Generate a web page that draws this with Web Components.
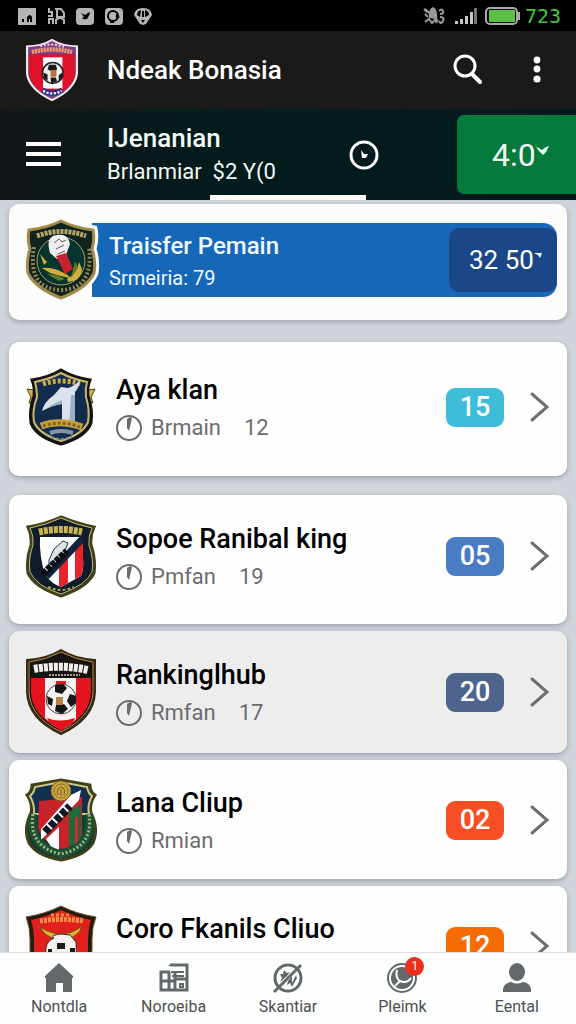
<!DOCTYPE html>
<html lang="id">
  <head>
    <meta charset="utf-8">
    <meta name="viewport" content="width=device-width, initial-scale=1">
    <title>Ndeak Bonasia</title>
<style>
  * {
    box-sizing: border-box;
  }
  body {
    margin: 0;
    height: 100vh;
    display: flex;
    flex-direction: column;
    background: #cfd5da;
    font-family: Roboto, "Liberation Sans", sans-serif;
  }
  main {
    flex: 1;
    min-height: 0;
    overflow-y: auto;
    scrollbar-width: none;
    display: flex;
    flex-direction: column;
    gap: 7px;
    padding: 4px 9px 8px;
  }
  main > * {
    flex: none;
  }
  transfer-card {
    margin-bottom: 15px;
  }
  club-card[size="large"] {
    margin-bottom: 12px;
  }
</style>
  </head>
  <body>
    <status-bar>723</status-bar>
    <app-header>Ndeak Bonasia</app-header>
    <match-bar>
      <span slot="title">IJenanian</span>
      <span slot="detail">Brlanmiar&nbsp; $2 Y(0</span>
      <span slot="score">4:0</span>
    </match-bar>

    <main>
      <transfer-card>
        <span slot="title">Traisfer Pemain</span>
        <span slot="detail">Srmeiria: 79</span>
        <span slot="value">32 50</span>
      </transfer-card>
      <club-card size="large" crest="one" style="--badge: #3dbdd8">
        <span slot="name">Aya klan</span>
        <span slot="detail">Brmain</span>
        <span slot="count">12</span>
        <span slot="badge">15</span>
      </club-card>
      <club-card size="medium" crest="stripes" style="--badge: #4a7cc3">
        <span slot="name">Sopoe Ranibal king</span>
        <span slot="detail">Pmfan</span>
        <span slot="count">19</span>
        <span slot="badge">05</span>
      </club-card>
      <club-card crest="ball" style="--badge: #4d648c; --card: #ededee">
        <span slot="name">Rankinglhub</span>
        <span slot="detail">Rmfan</span>
        <span slot="count">17</span>
        <span slot="badge">20</span>
      </club-card>
      <club-card size="small" crest="medal" style="--badge: #f84e26">
        <span slot="name">Lana Cliup</span>
        <span slot="detail">Rmian</span>
        <span slot="badge">02</span>
      </club-card>
      <club-card size="small" crest="eagle" style="--badge: #f66c04">
        <span slot="name">Coro Fkanils Cliuo</span>
        <span slot="detail">Rmian</span>
        <span slot="badge">12</span>
      </club-card>
    </main>

    <bottom-nav>
      <nav-item icon="home">Nontdla</nav-item>
      <nav-item icon="news">Noroeiba</nav-item>
      <nav-item icon="standings">Skantiar</nav-item>
      <nav-item icon="player" alerts="1">Pleimk</nav-item>
      <nav-item icon="account">Eental</nav-item>
    </bottom-nav>

    <!-- page parts -->

    <template id="status-bar">
      <style>
        :host {
          display: flex;
          flex: none;
          align-items: center;
          justify-content: space-between;
          height: 31px;
          padding: 0 15px 0 17px;
          background: #000;
          color: #3ec83a;
          font: 20px/28px "DejaVu Sans Mono", monospace;
        }
        div {
          display: flex;
          align-items: center;
          gap: 9px;
        }
        .system {
          gap: 5px;
        }
        svg {
          display: block;
        }
      </style>
      <div>
        <svg width="20" height="20" viewBox="0 0 20 20"><path fill="#b4b4b4" d="M1 2h18v17H1z"/><path d="M5 13h2v3H5zM10 16v-5q3-4 5 0v5h-2v-3h-1v3z"/></svg>
        <svg width="20" height="20" viewBox="0 0 20 20"><path d="M3 2v4h3v4H2M3 18v-5h4v5M9 3h6l3 4v4h-7V3M10 18v-4q4-4 8 0v4" fill="none" stroke="#b4b4b4" stroke-width="2"/></svg>
        <svg width="20" height="20" viewBox="0 0 20 20"><rect x="1" y="2" width="18" height="17" rx="4" fill="#b4b4b4"/><path d="M6 7l4 2 4-3 1 2-3 5q-4 1-5-1l2-1z"/></svg>
        <svg width="20" height="20" viewBox="0 0 20 20"><rect x="1" y="2" width="18" height="17" rx="4" fill="#b4b4b4"/><circle cx="9" cy="10" r="5" fill="none" stroke="#000" stroke-width="2"/><path d="M12 8l4 3-4 2zM6 14h4v3H6z"/></svg>
        <svg width="20" height="20" viewBox="0 0 20 20"><path fill="#b4b4b4" d="M1 9Q2 2 10 2t9 7l-6 9-3 1-3-1z"/><path d="M4 9q0-4 4-5l-1 7zM12 4q4 1 4 5l-4 2zM9 5h2v6H9zM8 14h4l-2 3z"/></svg>
      </div>
      <div class="system">
        <svg width="26" height="20" viewBox="0 0 26 20"><path fill="#9a9a9a" d="M6 12q-1-9 4-11 5 2 4 12z"/><path d="M1 3l3 3M2 8l3 3M2 16l4-3 3 4 3-3 2 3M2 3l13 12M16 5q3-3 4 0t-3 3M17 11q5 0 3 4t-4 0" fill="none" stroke="#9a9a9a" stroke-width="2"/></svg>
        <svg width="26" height="20" viewBox="0 0 26 20"><path fill="#c8c8c8" d="M1 15h3v3H1zM6 13h3v5H6zM11 10h3v8h-3zM16 6h3v12h-3z"/><path fill="#777" d="M20 2h3v16h-3z"/></svg>
        <svg width="35" height="18" viewBox="0 0 35 18"><rect x="1" y="1" width="31" height="16" rx="4" fill="none" stroke="#aaa" stroke-width="2"/><path fill="#5bc044" d="M4 3h26v12H4z"/><path fill="#aaa" d="M32 5h3v8h-3z"/></svg>
        <slot></slot>
      </div>
    </template>

    <template id="app-header">
      <style>
        :host {
          display: flex;
          flex: none;
          align-items: center;
          height: 78px;
          padding: 0 20px 0 25px;
          background: #1a1a19;
          color: #fff;
        }
        h1 {
          flex: 1;
          margin: 0 0 0 28px;
          font-size: 26px;
          font-weight: 500;
          line-height: 36px;
        }
        button {
          display: flex;
          margin: 0 0 0 32px;
          padding: 0;
          border: 0;
          background: none;
          color: inherit;
        }
        club-crest {
          width: 54px;
          height: 64px;
        }
      </style>
      <club-crest kind="badge"></club-crest>
      <h1><slot></slot></h1>
      <button aria-label="Cari"><svg width="32" height="32" viewBox="0 0 32 32" fill="none" stroke="#fff"><circle cx="13" cy="12" r="10" stroke-width="3"/><path d="M20 20l8 8" stroke-width="4" stroke-linecap="round"/></svg></button>
      <button aria-label="Menu lain"><svg width="40" height="32" viewBox="0 0 40 32" fill="#fff"><circle cx="21" cy="6" r="3.4"/><circle cx="21" cy="15" r="3.4"/><circle cx="21" cy="25" r="3.6"/></svg></button>
    </template>

    <template id="match-bar">
      <style>
        :host {
          display: flex;
          flex: none;
          flex-direction: column;
          align-items: center;
          padding-top: 6px;
          background: linear-gradient(90deg, #111518, #021c1d 40%, #05191c);
          color: #f2faf4;
        }
        .row {
          align-self: stretch;
          display: flex;
          align-items: center;
        }
        button {
          display: flex;
          align-items: center;
          padding: 0;
          border: 0;
          background: none;
          color: inherit;
          font: inherit;
        }
        .menu {
          margin: 0 46px 0 26px;
        }
        .text {
          flex: 1;
          line-height: 34px;
        }
        .title {
          font-size: 26px;
          font-weight: 500;
        }
        .detail {
          font-size: 22px;
        }
        .score {
          height: 79px;
          width: 119px;
          margin: 0 0 1px 78px;
          padding-left: 35px;
          border-radius: 7px 0 0 7px;
          background: #047b3c;
          font-size: 32px;
        }
        .score svg {
          margin-bottom: 8px;
        }
        .indicator {
          width: 27%;
          height: 5px;
          background: #fdfdf3;
        }
      </style>
      <div class="row">
        <button class="menu" aria-label="Menu"><svg width="35" height="26" viewBox="0 0 35 26" fill="#fff"><path d="M0 0h35v4H0zM0 10h35v4H0zM0 20h35v4H0z"/></svg></button>
        <div class="text">
          <div class="title"><slot name="title"></slot></div>
          <div class="detail"><slot name="detail"></slot></div>
        </div>
        <svg width="30" height="30" viewBox="0 0 30 30"><circle cx="15" cy="15" r="13" fill="none" stroke="#fff" stroke-width="3"/><path fill="#fff" d="M12 10l3 4h4l-2 4h-4z"/></svg>
        <button class="score"><slot name="score"></slot><svg width="13" height="9" viewBox="0 0 13 9" fill="#e6fff0"><path d="M0 1l3 1 3 2 4-3 3-1-3 6-3 3-4-4z"/></svg></button>
      </div>
      <div class="indicator"></div>
    </template>

    <template id="transfer-card">
      <style>
        :host {
          display: flex;
          align-items: center;
          padding: 13px 10px 17px 16px;
          border-radius: 10px;
          background: #fcfcfb;
          box-shadow: 0 2px 5px rgba(60, 70, 80, .35);
        }
        club-crest {
          position: relative;
        }
        .bar {
          flex: 1;
          display: flex;
          align-items: center;
          justify-content: space-between;
          height: 74px;
          margin-left: -5px;
          padding-left: 17px;
          border-radius: 0 14px 14px 0;
          background: #1767b9;
          color: #f0faff;
        }
        .text {
          padding-top: 4px;
          line-height: 32px;
        }
        .title {
          font-size: 24px;
          font-weight: 500;
        }
        .detail {
          font-size: 20px;
        }
        button {
          display: flex;
          align-items: center;
          width: 108px;
          height: 64px;
          padding: 0 0 0 20px;
          border: 0;
          border-radius: 10px;
          background: #1b4788;
          color: #fff;
          font: 26px/34px Roboto, sans-serif;
        }
        svg {
          margin-bottom: 10px;
        }
      </style>
      <club-crest kind="garuda"></club-crest>
      <div class="bar">
        <div class="text">
          <div class="title"><slot name="title"></slot></div>
          <div class="detail"><slot name="detail"></slot></div>
        </div>
        <button><slot name="value"></slot><svg width="8" height="6" viewBox="0 0 8 6" fill="#fff"><path d="M0 1h8L6 6 4 3z"/></svg></button>
      </div>
    </template>

    <template id="club-card">
      <style>
        :host {
          display: block;
          border-radius: 10px;
          background: var(--card, #fefefe);
          box-shadow: 0 2px 5px rgba(60, 70, 80, .35);
        }
        a {
          display: flex;
          align-items: center;
          padding: 18px 17px 18px 16px;
          color: #000;
          text-decoration: none;
        }
        :host([size="large"]) a {
          padding-top: 22px;
          padding-bottom: 26px;
        }
        :host([size="medium"]) a {
          padding-top: 18px;
          padding-bottom: 25px;
        }
        :host([size="small"]) a {
          padding-top: 17px;
          padding-bottom: 16px;
        }
        .text {
          flex: 1;
          margin-left: 19px;
          padding-top: 3px;
          line-height: 38px;
        }
        .name {
          font-size: 27px;
          font-weight: 500;
        }
        .detail {
          display: flex;
          align-items: center;
          color: #6b6c70;
          font-size: 22px;
        }
        .detail svg {
          margin-right: 9px;
        }
        slot[name="count"] {
          display: block;
          margin-left: 23px;
        }
        .badge {
          width: 58px;
          border-radius: 9px;
          background: var(--badge);
          color: #fff;
          font-size: 27px;
          font-weight: 500;
          line-height: 39px;
          text-align: center;
        }
        .chevron {
          margin-left: 25px;
        }
      </style>
      <a href="#">
        <club-crest></club-crest>
        <div class="text">
          <div class="name"><slot name="name"></slot></div>
          <div class="detail">
            <svg width="26" height="28" viewBox="0 0 26 28"><circle cx="13" cy="14" r="12" fill="none" stroke="#6a6b6e" stroke-width="2"/><path fill="#6a6b6e" d="M11 5l3-2 2 1-3 13-2-3z"/></svg>
            <slot name="detail"></slot><slot name="count"></slot>
          </div>
        </div>
        <div class="badge"><slot name="badge"></slot></div>
        <svg class="chevron" width="21" height="36" viewBox="0 0 21 36" fill="none" stroke="#6f6f70" stroke-width="3"><path d="M3 5l15 13L3 31" stroke-linecap="round"/></svg>
      </a>
    </template>

    <template id="bottom-nav">
      <style>
        :host {
          flex: none;
          border-top: 1px solid #dcdee0;
          background: #fdfefe;
        }
        nav {
          display: flex;
          padding: 0 2px;
        }
        ::slotted(*) {
          flex: 1;
        }
      </style>
      <nav><slot></slot></nav>
    </template>

    <template id="nav-item">
      <style>
        :host {
          display: block;
        }
        a {
          display: flex;
          flex-direction: column;
          align-items: center;
          padding: 9px 0 4px;
          color: #4d4f52;
          font-size: 16px;
          line-height: 26px;
          text-decoration: none;
        }
        .icon {
          position: relative;
          height: 32px;
        }
        .alerts {
          position: absolute;
          top: -5px;
          right: -6px;
          width: 19px;
          border-radius: 50%;
          background: #e8301c;
          color: #fff;
          font-size: 12px;
          line-height: 19px;
          text-align: center;
        }
      </style>
      <a href="#"><span class="icon"></span><slot></slot></a>
    </template>

    <!-- nav icons -->

    <template id="icon-home"><svg width="32" height="32" viewBox="0 0 32 32"><path fill="#65686b" d="M16 1l14 13v2h-1v14h-9v-9h-7v9H3V16H2v-2z"/></svg></template>
    <template id="icon-news"><svg width="32" height="32" viewBox="0 0 32 32" fill="none" stroke="#65686b"><path d="M12 3h17v25H3V10h9M12 3v1M3 19h14M11 10v18M17 9v19M18 17h11" stroke-width="3"/><path d="M13 10h13M14 14h12M22 22h3v3h-3z" stroke-width="2"/></svg></template>
    <template id="icon-standings"><svg width="32" height="32" viewBox="0 0 32 32"><circle cx="16" cy="16" r="13" fill="none" stroke="#65686b" stroke-width="3"/><path d="M2 30L29 3" stroke="#65686b" stroke-width="3"/><path fill="#65686b" d="M8 12h3l1-4 3 3 3-1-3 4-7 6 2-4zM16 19l4-5v7l4-8 1 3-5 9-2-4-3 2z"/></svg></template>
    <template id="icon-player"><svg width="32" height="32" viewBox="0 0 32 32"><circle cx="16" cy="16" r="14" fill="none" stroke="#65686b" stroke-width="2"/><circle cx="16" cy="16" r="11" fill="#65686b"/><path d="M11 8q-2 8 3 11 7 3 11-3M14 19l-5 5" fill="none" stroke="#fff" stroke-width="2"/></svg></template>
    <template id="icon-account"><svg width="32" height="32" viewBox="0 0 32 32" fill="#65686b"><ellipse cx="16" cy="10" rx="8" ry="9"/><path d="M2 30v-3q1-6 8-7 6 3 12 0 7 1 8 7v3z"/></svg></template>

    <!-- club crests, all on a 72 x 86 grid -->

    <template id="crest-badge">
      <svg viewBox="0 0 72 86">
        <path fill="#f6e9f0" d="M36 1q14 9 35 9v38q-3 22-35 37Q4 70 1 48V10q21 0 35-9z"/>
        <path fill="#7c3c86" d="M36 4q14 8 32 8v36q-3 20-32 34Q7 68 4 48V12q18 0 32-8z"/>
        <path fill="#e0122a" d="M5 22h62v26q-2 14-16 24H21Q7 62 5 48z"/>
        <path fill="#fff" d="M24 26h26v42H24z"/>
        <path d="M9 19q27-7 54 0" fill="none" stroke="#f29a6a" stroke-width="6" stroke-dasharray="3 1"/>
        <path d="M20 11q16-5 32 1" fill="none" stroke="#e7c6e0" stroke-width="3" stroke-dasharray="3 2"/>
        <circle cx="37" cy="47" r="14" fill="#eee" stroke="#222" stroke-width="2"/>
        <path fill="#1b1b1b" d="M32 36h9l2 6-6 4-7-4zM24 46l6 3v8l-4-2zM45 50l5-4v8l-5 5zM34 53h7l2 5-8 3z"/>
        <path fill="#b7713a" d="M34 43h8v9h-8z"/>
        <path d="M23 70q14 8 27 0" fill="none" stroke="#2d2a86" stroke-width="7"/>
        <path d="M24 71q12 7 25 0" fill="none" stroke="#fff" stroke-width="3" stroke-dasharray="3 2"/>
      </svg>
    </template>

    <template id="crest-garuda">
      <svg viewBox="0 0 72 86" overflow="visible">
        <path fill="#fcfcfb" stroke="#fcfcfb" stroke-width="7" d="M36 3q14 7 33 9 2 9-1 20 4 12 2 24-7 16-34 26Q9 72 2 56 0 44 4 32 1 21 3 12q19-2 33-9z"/>
        <path fill="#10231f" stroke="#a28b4b" stroke-width="3" d="M36 4q14 7 32 9 2 9-1 19 4 12 2 24-7 15-33 25Q10 71 3 56 1 44 5 32 2 21 4 13q18-2 32-9z"/>
        <circle cx="36" cy="44" r="24" fill="#06342f" stroke="#a8a268" stroke-width="1"/>
        <path d="M12 19q24-9 49 0" fill="none" stroke="#b8a669" stroke-width="5" stroke-dasharray="3 1"/>
        <path d="M9 30q-7 42 27 43 33-1 28-43" fill="none" stroke="#8f8655" stroke-width="4" stroke-dasharray="2 2"/>
        <path fill="#f1eef0" d="M25 36q-5-17 7-18 11-2 13 9l-4 11-9 4z"/>
        <path fill="#c9202e" d="M31 39l10-3 7 16-8 5z"/>
        <path d="M29 26l5-4 3 3 4-2M31 32l8-4M33 37l7-3" fill="none" stroke="#64585e" stroke-width="1"/>
        <path fill="#d1ad3c" d="M15 37l7 8-3 3zM17 51q10-1 20 4 9 4 7 6-9-2-19-5zM42 62q10-6 12-17l3 7q-1 12-14 13z"/>
        <path fill="#587b2c" d="M22 57q10 0 18 5l-6 2zM50 44l3 7-7 10z"/>
      </svg>
    </template>

    <template id="crest-one">
      <svg viewBox="0 0 72 86">
        <path fill="#d6b43e" stroke="#4c4216" d="M9 26L2 25l4 8-2 6 13-2zM63 26l7-1-4 8 2 6-13-2z"/>
        <path fill="#10203b" stroke="#14140f" stroke-width="3" d="M36 6q11 7 29 10-3 7-2 16 5 14 3 27-5 14-30 21Q11 73 6 59 4 46 9 32q1-9-2-16 18-3 29-10z"/>
        <path fill="#122c50" stroke="#cdb765" stroke-width="2" d="M36 9q11 6 26 9-2 7-1 15 4 13 2 25-5 12-27 19Q14 70 9 58 7 46 12 33q0-8-2-15 15-3 26-9z"/>
        <path d="M18 20q18-6 37 0" fill="none" stroke="#c7aa4a" stroke-width="5" stroke-dasharray="3 2"/>
        <path fill="#dce2ed" d="M17 47q2-9 12-16l7-8 7 1q7-2 12-8-1 8-5 12v34H37V40q-9 1-20 7z"/>
        <path fill="#9fafc6" d="M46 31h4v31h-6zM22 43l15-7v4z"/>
        <path d="M16 62q19-7 41 1" fill="none" stroke="#c5a13d" stroke-width="7"/>
        <path d="M18 62q18-6 37 1" fill="none" stroke="#816323" stroke-width="3" stroke-dasharray="3 2"/>
        <path d="M25 69q11-4 23 0" fill="none" stroke="#8593a8" stroke-width="4"/>
        <path d="M26 73q10 4 21 0" fill="none" stroke="#7e8ca1" stroke-width="2" stroke-dasharray="3 2"/>
      </svg>
    </template>

    <template id="crest-stripes">
      <svg viewBox="0 0 72 86">
        <path fill="#101c2b" stroke="#41401b" stroke-width="3" d="M36 4q17 7 33 10-4 8-3 18 5 15 3 28-6 14-33 23Q9 74 3 60 1 46 6 32q1-10-3-18 17-3 33-10z"/>
        <path fill="none" stroke="#cabd70" d="M36 5q16 7 31 10-4 8-3 17 5 15 3 27-6 13-31 22Q11 73 5 59 3 46 8 32q1-9-3-17 16-3 31-10z"/>
        <clipPath id="field"><path d="M15 24h43v20q1 12-2 19l-20 11q-9-3-16-12-6-20-5-38z"/></clipPath>
        <g clip-path="url(#field)">
          <path fill="#fff" d="M10 20h50v60H10z"/>
          <path fill="#e8232b" d="M34 46h9v35h-9zM50 30h8v50h-8z"/>
          <path fill="#12233d" d="M14 67L58 20v10L18 72z"/>
        </g>
        <path fill="#dfe2e4" stroke="#273243" d="M24 47l5-11 9-8 5 2-4 10-15 13z"/>
        <path d="M18 61l24-23" stroke="#090c12" stroke-width="7" stroke-dasharray="5 1"/>
        <path d="M14 19q22-5 43 0" fill="none" stroke="#c7b54e" stroke-width="7" stroke-dasharray="4 1"/>
        <path d="M23 74q13 6 26 0" fill="none" stroke="#a9a15e" stroke-width="2" stroke-dasharray="3 2"/>
      </svg>
    </template>

    <template id="crest-ball">
      <svg viewBox="0 0 72 86">
        <path fill="#171310" stroke="#3a2d13" stroke-width="2" d="M36 1q15 9 34 10v32q-1 27-34 42Q3 70 2 43V11Q21 10 36 1z"/>
        <path fill="none" stroke="#b5974d" stroke-width="1" d="M36 3q15 8 32 10v30q-1 25-32 40Q5 68 4 43V13Q21 11 36 3z"/>
        <path fill="#e4131d" d="M6 29h60v14q-1 24-30 38Q7 67 6 43z"/>
        <path fill="#f8f1f0" d="M20 29h31v41q-6 8-15 11-9-5-16-12z"/>
        <path fill="#e4131d" d="M22 69q12 5 28 0l-2 5-12 8-12-9zM31 32h10v6H31z"/>
        <path d="M9 20q27-5 54 1" fill="none" stroke="#f2eee8" stroke-width="8" stroke-dasharray="4 1"/>
        <path d="M24 26h31" stroke="#a59d93" stroke-width="2" stroke-dasharray="2 1"/>
        <circle cx="36" cy="50" r="15" fill="#f4f4f4" stroke="#4a4443" stroke-width="1"/>
        <path fill="#151515" d="M30 36l8-1 4 4-5 6-7-2zM22 47l6 3-1 7-4-2zM45 45l6 2v7l-5 4-4-6zM31 56l8-1 4 5-6 5-7-3z"/>
        <path fill="#bc8340" d="M31 48h7v8h-7z"/>
      </svg>
    </template>

    <template id="crest-medal">
      <svg viewBox="0 0 72 86">
        <path fill="#173a33" stroke="#3f4019" stroke-width="3" d="M36 3l29 5q0 7 5 10-6 9-4 18 8 16 2 30-8 13-32 17Q12 79 4 66-2 52 6 36q2-9-4-18 5-3 5-10z"/>
        <path fill="#12304d" stroke="#cfc683" stroke-width="2" d="M36 5l26 5q1 6 5 9-5 9-3 18H9q1-9-4-18 4-3 5-9z"/>
        <path fill="#c8222b" d="M14 24l43-4v38q-9 13-21 14Q16 65 13 50z"/>
        <path fill="#1e6b3a" d="M44 35l12-8v39l-12 3z"/>
        <path fill="#d42b2e" d="M50 40h3v28h-3z"/>
        <path fill="#fff" d="M21 62l13-12v24h-5zM16 52l30-34 10-5-2 10-32 34-6 6z"/>
        <path d="M20 55l25-26" stroke="#101827" stroke-width="8" stroke-dasharray="6 2"/>
        <path d="M8 37q-5 33 28 40 33-7 28-40" fill="none" stroke="#1f5234" stroke-width="8"/>
        <path d="M8 37q-5 33 28 40 33-7 28-40" fill="none" stroke="#9fb584" stroke-width="3" stroke-dasharray="2 2"/>
        <circle cx="36" cy="14" r="10" fill="#c8a440" stroke="#7b6420"/>
        <circle cx="36" cy="14" r="7" fill="none" stroke="#8f7327"/>
        <path d="M33 18q-2-7 3-8 5 1 3 8M36 12v7" fill="none" stroke="#7b5f1c"/>
      </svg>
    </template>

    <template id="crest-eagle">
      <svg viewBox="0 0 72 86">
        <path fill="#241b12" stroke="#715724" d="M36 3q16 8 35 11-4 10-4 22v12q-4 24-31 35Q9 72 5 48V36Q5 24 1 14q19-3 35-11z"/>
        <path fill="#e11f1c" d="M36 7q15 7 30 10-3 10-3 22v9q-4 20-27 31Q13 68 9 48v-9q0-12-3-22 15-3 30-10z"/>
        <path d="M15 18q21-3 43 0" fill="none" stroke="#ed8f42" stroke-width="5" stroke-dasharray="3 1"/>
        <path d="M26 12h19" stroke="#ed8f42" stroke-width="3" stroke-dasharray="3 2"/>
        <path fill="#e2b133" stroke="#765018" d="M15 24q11 7 21 7 11 0 21-8-3 10-15 13H31q-12-3-16-12z"/>
        <path fill="#f3f2ee" stroke="#3a342f" d="M28 35q-2-3 8-4l9 1 6 7 1 32H20l1-26q1-7 8-10z"/>
        <path fill="#1d1c1b" d="M32 40h8v6h-8zM23 46h4v9h-4zM45 45h5v9h-5z"/>
      </svg>
    </template>

<script>
// clones the <template> that carries the element's own tag name
class Part extends HTMLElement {
  constructor() {
    super()
    let copyOfTemplate = document
      .getElementById(this.localName)
      .content
      .cloneNode(true)
    this.attachShadow({mode: 'open'}).appendChild(copyOfTemplate)
  }
}

class ClubCrest extends HTMLElement {
  static observedAttributes = ['kind']

  constructor() {
    super()
    this.attachShadow({mode: 'open'})
  }

  attributeChangedCallback(name, old, kind) {
    this.shadowRoot.innerHTML = `
      <style>
        :host { display: block; flex: none; width: 72px; height: 86px; }
        svg { display: block; width: 100%; height: 100%; }
      </style>`
    let drawing = document.getElementById('crest-' + kind)
    this.shadowRoot.appendChild(drawing.content.cloneNode(true))
  }
}

class ClubCard extends Part {
  connectedCallback() {
    this.shadowRoot.querySelector('club-crest')
      .setAttribute('kind', this.getAttribute('crest'))
  }
}

class NavItem extends Part {
  connectedCallback() {
    let icon = this.shadowRoot.querySelector('.icon')
    let drawing = document.getElementById('icon-' + this.getAttribute('icon'))
    icon.replaceChildren(drawing.content.cloneNode(true))
    if (this.hasAttribute('alerts')) {
      let alerts = document.createElement('span')
      alerts.className = 'alerts'
      alerts.textContent = this.getAttribute('alerts')
      icon.appendChild(alerts)
    }
  }
}

customElements.define('club-crest', ClubCrest)
customElements.define('status-bar', class extends Part {})
customElements.define('app-header', class extends Part {})
customElements.define('match-bar', class extends Part {})
customElements.define('transfer-card', class extends Part {})
customElements.define('club-card', ClubCard)
customElements.define('bottom-nav', class extends Part {})
customElements.define('nav-item', NavItem)
</script>
  </body>
</html>
